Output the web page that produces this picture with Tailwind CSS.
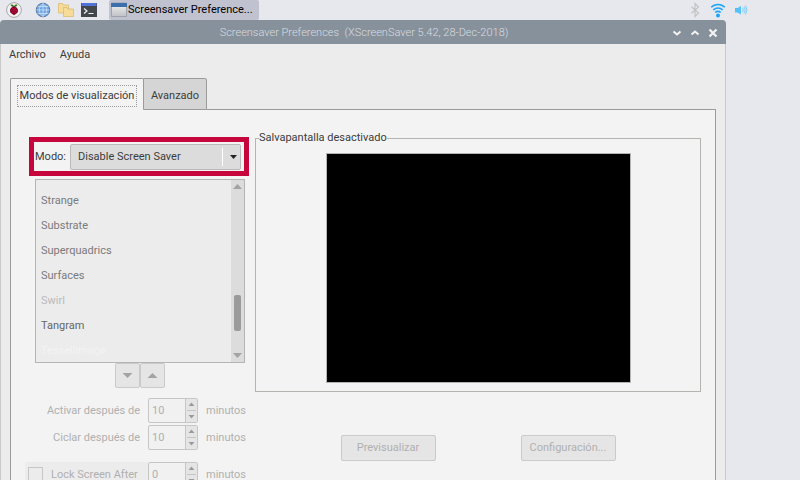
<!DOCTYPE html>
<html lang="es">
<head>
<meta charset="utf-8">
<title>Screensaver Preferences</title>
<script src="https://cdn.jsdelivr.net/npm/@tailwindcss/browser@4"></script>
</head>
<body class="flex h-screen flex-col overflow-hidden bg-[#e7e8ed] font-['Roboto','Liberation_Sans',sans-serif] text-[11px] leading-4 font-normal text-[#3c3c3c]">

<!-- Taskbar -->
<header class="flex h-5 shrink-0 items-center pl-1.5 pr-[51px]">
  <button aria-label="Menu" class="mr-[13px]">
    <svg class="block size-4" viewBox="0 0 16 16">
      <circle cx="8" cy="8" r="7.4" fill="#f1f1f1" stroke="#a9a9a9"/>
      <path d="M7.8 4.9C6 5 4.7 4 4.5 2.8c1.6-.5 3 .1 3.5 1.4.5-1.3 1.9-1.9 3.5-1.4C11.300 4 10 5 8.200 4.900z" fill="#3f7a22"/>
      <path d="M8 4.600c1.500 0 2.300.5 2.700 1.500 1 .6 1.500 1.700 1.200 2.800-.1 1.300-.7 2.200-1.700 2.700-.6.800-1.400 1.300-2.200 1.300s-1.600-.5-2.200-1.300c-1-.5-1.600-1.400-1.700-2.700-.3-1.100.2-2.200 1.200-2.800C5.700 5.100 6.500 4.600 8 4.600z" fill="#5e0a22"/>
      <g fill="#c7053d"><circle cx="6.700" cy="6.200" r="1"/><circle cx="9.300" cy="6.200" r="1"/><circle cx="8" cy="8.200" r="1.200"/><circle cx="5.400" cy="8.600" r="1"/><circle cx="10.600" cy="8.600" r="1"/><circle cx="6.600" cy="10.400" r="1"/><circle cx="9.400" cy="10.400" r="1"/><circle cx="8" cy="11.900" r=".7"/></g>
    </svg>
  </button>
  <button aria-label="Web" class="mr-[7px]">
    <svg class="block size-4" viewBox="0 0 16 16">
      <circle cx="8" cy="8" r="6.800" fill="#6ea5e0" stroke="#5877a3"/>
      <path d="M8 1.500v13M1.500 8h13M2.700 4.500h10.600M2.700 11.500h10.600M8 1.500c-5 4-5 9 0 13M8 1.500c5 4 5 9 0 13" fill="none" stroke="#cfe2f7" stroke-width=".8"/>
    </svg>
  </button>
  <button aria-label="Archivos" class="mr-[7px]">
    <svg class="block size-4" viewBox="0 0 16 16" fill="#f6dc98" stroke="#d9b868" stroke-width=".7">
      <path d="M.5 1.500h4l1 1.500h5v8H.5z"/>
      <path d="M5.500 5.500h3.500l1 1.500h5.500v7.500h-10z"/>
    </svg>
  </button>
  <button aria-label="Terminal" class="mr-3">
    <svg class="block size-4" viewBox="0 0 16 16">
      <path d="M0 1h16v14H0z" fill="#42474b"/><path d="M.5 1h15v3H.5z" fill="#4f74d6"/>
      <path d="M3 6.500l3 2.500-3 2.500M7.500 11.500h5" fill="none" stroke="#f2f2f2" stroke-width="1.200"/>
    </svg>
  </button>
  <button class="flex h-5 w-[150px] items-center gap-px rounded-xs bg-[#c1c2cf] pl-0.5 text-black">
    <svg class="size-4 shrink-0" viewBox="0 0 16 16">
      <defs><linearGradient id="g" x2="0" y2="1"><stop offset="0" stop-color="#f4f4f4"/><stop offset="1" stop-color="#bfc1c4"/></linearGradient></defs>
      <path d="M.5 1h15v13.500H.5z" fill="url(#g)" stroke="#8e959c" stroke-width=".7"/><path d="M0 1h16v4H0z" fill="#3c70ad"/>
    </svg>
    <span class="whitespace-nowrap">Screensaver Preference...</span>
  </button>
  <div class="ml-auto flex items-center gap-[7px]">
    <svg class="size-4" viewBox="0 0 16 16" role="img" aria-label="Bluetooth"><path d="M4.500 4.800l7 6.200-3.500 3.500v-13l3.500 3.500-7 6.200" fill="none" stroke="#c3c3c6" stroke-width="1.200"/></svg>
    <svg class="size-4" viewBox="0 0 16 16" role="img" aria-label="Wi-Fi"><g fill="none" stroke="#1ea4f7" stroke-width="1.600"><path d="M1.200 5.300a9.500 9.500 0 0 1 13.600 0M3.300 8a6.500 6.500 0 0 1 9.400 0M5.300 10.500a3.800 3.800 0 0 1 5.400 0"/></g><circle cx="8" cy="13.500" r="2" fill="#1ea4f7"/></svg>
    <svg class="size-4" viewBox="0 0 16 16" role="img" aria-label="Volumen"><path d="M2 6h2.500L8 4v8.500L4.500 10.500H2z" fill="#55c1fb"/><path d="M9.500 5.800q1.500 2.200 0 4.400M11 4.600q2.500 3.400 0 6.800M12.500 3.500q3 4.500 0 9" fill="none" stroke="#7fcdf8" stroke-width="1"/></svg>
  </div>
</header>

<main class="mr-[74px] flex min-h-0 flex-1 flex-col">
  <!-- Title bar -->
  <div class="flex h-6 shrink-0 items-center rounded-t-sm bg-[#87919b] pr-1.5 text-[#d9dce0]">
    <h1 class="flex-1 pt-px pl-[58px] text-center font-light whitespace-pre">Screensaver Preferences  (XScreenSaver 5.42, 28-Dec-2018)</h1>
    <div class="flex gap-1 pt-0.5">
      <button aria-label="Minimizar"><svg class="block size-3.5" viewBox="0 0 14 14"><path d="M3.500 5.500l3.500 3 3.500-3" fill="none" stroke="#f3f3f3" stroke-width="2"/></svg></button>
      <button aria-label="Maximizar"><svg class="block size-3.5" viewBox="0 0 14 14"><path d="M3.500 8.500l3.500-3 3.500 3" fill="none" stroke="#f3f3f3" stroke-width="2"/></svg></button>
      <button aria-label="Cerrar"><svg class="block size-3.5" viewBox="0 0 14 14"><path d="M3.500 3.500l7 7M10.500 3.500l-7 7" fill="none" stroke="#f3f3f3" stroke-width="2.200"/></svg></button>
    </div>
  </div>

  <div class="flex min-h-0 flex-1 flex-col border-x border-[#c9c9cc] bg-[#ececec] px-[9px]">
    <nav class="-ml-px flex h-[34px] shrink-0 gap-3.5 pt-[3px]">
      <a href="#" class="h-4">Archivo</a>
      <a href="#" class="h-4">Ayuda</a>
    </nav>

    <!-- Tabs -->
    <div role="tablist" class="flex h-8 shrink-0 items-start">
      <button role="tab" aria-selected="true" class="z-10 h-8 w-[133px] rounded-tl-xs border-t border-l border-[#9b9b9b] bg-[#f3f3f3] px-1.5 pt-1.5 pb-1"><span class="-my-px block border border-dotted border-[#9b9b9b] py-0.5 whitespace-nowrap">Modos de visualización</span></button>
      <button role="tab" aria-selected="false" class="h-8 w-16 rounded-tr-xs border border-[#9b9b9b] bg-[#d5d5d5] pt-1">Avanzado</button>
      <div class="h-8 flex-1 border-b border-[#9b9b9b]"></div>
    </div>

    <section role="tabpanel" class="flex min-h-0 flex-1 items-start gap-1.5 border-x border-[#9b9b9b] bg-[#f3f3f3] px-3.5 pt-[27px]">
      <div class="w-56 shrink-0">
        <div class="ml-1 flex h-[39px] items-center gap-1 border-5 border-[#c7053d] pr-[3px] pl-px">
          <label for="mode">Modo:</label>
          <div class="relative flex-1">
            <select id="mode" class="block h-[26px] w-full appearance-none rounded-xs border border-[#b9b9b9] bg-[#dcdcdc] pl-[7px]"><option>Disable Screen Saver</option></select>
            <svg class="pointer-events-none absolute top-0 right-0 h-[26px] w-5" viewBox="0 0 20 26"><path d="M1.500 4v18" stroke="#fff"/><path d="M9 11h7l-3.500 4z" fill="#222"/></svg>
          </div>
        </div>

        <div class="mt-[3px] mr-1 ml-2.5 flex h-[184px] border border-[#b4b4b4] bg-[#ececec]">
          <ul role="listbox" aria-label="Salvapantallas" aria-disabled="true" class="flex-1 overflow-hidden pt-2 pl-[5px] leading-[25px] text-[#7a7a7a]">
            <li role="option">Strange</li>
            <li role="option">Substrate</li>
            <li role="option">Superquadrics</li>
            <li role="option">Surfaces</li>
            <li role="option" class="text-[#bababa]">Swirl</li>
            <li role="option" class="text-[#666]">Tangram</li>
            <li role="option" class="text-[#f3f3f3]">Tessellimage</li>
          </ul>
          <div class="flex w-[13px] flex-col items-center bg-[#dcdcdc]">
            <svg class="h-3.5 w-[13px]" viewBox="0 0 13 14"><path d="M2 9h9L6.500 4z" fill="#a3a3a3"/></svg>
            <div class="mt-[101px] h-9 w-[7px] rounded-xs bg-[#9b9b9b]"></div>
            <svg class="mt-auto h-3.5 w-[13px]" viewBox="0 0 13 14"><path d="M2 5h9l-4.500 5z" fill="#a3a3a3"/></svg>
          </div>
        </div>

        <div class="mr-1 ml-2.5 flex justify-center">
          <button disabled aria-label="Siguiente" class="size-[25px] rounded-xs border border-[#cacaca] bg-[#e5e5e5]"><svg class="block size-[23px]" viewBox="0 0 23 23"><path d="M6.500 9h10l-5 5z" fill="#a3a3a3"/></svg></button>
          <button disabled aria-label="Anterior" class="size-[25px] rounded-xs border border-[#cacaca] bg-[#e5e5e5]"><svg class="block size-[23px]" viewBox="0 0 23 23"><path d="M6.500 14h10l-5-5z" fill="#a3a3a3"/></svg></button>
        </div>

        <div class="mt-2.5 flex flex-col gap-0.5 text-[#b0b0b0]">
          <div class="flex items-center gap-2">
            <label for="after" class="w-[115px] text-right">Activar después de</label>
            <div class="flex h-[25px] w-[50px] rounded-xs border border-[#c6c6c6] bg-[#f1f1f1]">
              <input id="after" disabled value="10" class="w-[37px] border-r border-[#c6c6c6] pl-[3px]">
              <svg class="h-[23px] w-[11px] bg-[#e5e5e5]" viewBox="0 0 11 23"><path d="M2.500 7h6l-3-3.500zM2.500 16h6l-3 3.500z" fill="#9b9b9b"/><path d="M1 11.500h9" stroke="#c6c6c6"/></svg>
            </div>
            <span>minutos</span>
          </div>
          <div class="flex items-center gap-2">
            <label for="cycle" class="w-[115px] text-right">Ciclar después de</label>
            <div class="flex h-[25px] w-[50px] rounded-xs border border-[#c6c6c6] bg-[#f1f1f1]">
              <input id="cycle" disabled value="10" class="w-[37px] border-r border-[#c6c6c6] pl-[3px]">
              <svg class="h-[23px] w-[11px] bg-[#e5e5e5]" viewBox="0 0 11 23"><path d="M2.500 7h6l-3-3.500zM2.500 16h6l-3 3.500z" fill="#9b9b9b"/><path d="M1 11.500h9" stroke="#c6c6c6"/></svg>
            </div>
            <span>minutos</span>
          </div>
          <div class="mt-2.5 flex items-center gap-2">
            <label class="-mr-2 flex h-[25px] w-[123px] items-center gap-2 bg-[#ececec] pl-[3px] whitespace-nowrap"><input type="checkbox" disabled class="size-[15px] appearance-none border border-[#c6c6c6]">Lock Screen After</label>
            <div class="flex h-[25px] w-[50px] rounded-xs border border-[#c6c6c6] bg-[#f1f1f1]">
              <input aria-label="Lock Screen After" disabled value="0" class="w-[37px] border-r border-[#c6c6c6] pl-[3px]">
              <svg class="h-[23px] w-[11px] bg-[#e5e5e5]" viewBox="0 0 11 23"><path d="M2.500 7h6l-3-3.500zM2.500 16h6l-3 3.500z" fill="#9b9b9b"/><path d="M1 11.500h9" stroke="#c6c6c6"/></svg>
            </div>
            <span>minutos</span>
          </div>
        </div>
      </div>

      <div class="flex-1">
        <fieldset class="-mt-[7px] border border-[#b4b4b0] pb-2">
          <legend class="ml-[3px]">Salvapantalla desactivado</legend>
          <div class="mx-auto mt-[7px] h-[230px] w-[305px] border border-[#b4b4b4] bg-black"></div>
        </fieldset>
        <div class="mt-[43px] flex justify-center gap-[85px] text-[#b0b0b0]">
          <button disabled class="h-[26px] w-[95px] rounded-xs border border-[#cacaca] bg-[#e5e5e5]">Previsualizar</button>
          <button disabled class="h-[26px] w-[95px] rounded-xs border border-[#cacaca] bg-[#e5e5e5]">Configuración...</button>
        </div>
      </div>
    </section>
  </div>
</main>
</body>
</html>
